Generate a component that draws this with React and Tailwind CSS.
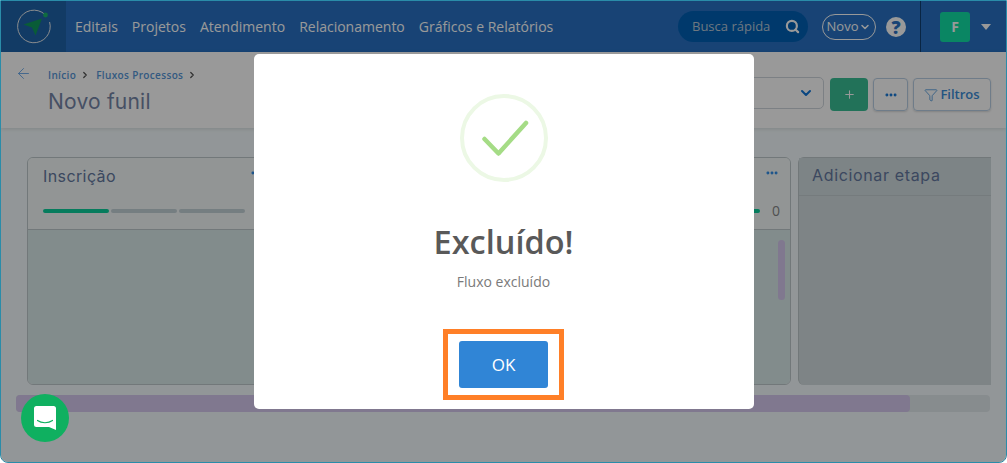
import { Search, ChevronDown, Ellipsis, Plus, Funnel, ArrowLeft, ChevronRight } from 'lucide-react';

const navItems = ['Editais', 'Projetos', 'Atendimento', 'Relacionamento', 'Gráficos e Relatórios'];

function Logo() {
  return (
    <svg width="36" height="36" viewBox="0 0 36 36" fill="none">
      <path d="M29 5.5A16.3 16.3 0 1 0 33.6 13" stroke="#e8eaed" strokeWidth="1" />
      <circle cx="29.5" cy="6" r="2.4" fill="#19b36b" />
      <path d="M7.5 15.5 26 9.5 19.5 26.5 16 18.5z" fill="#0f9a5c" />
    </svg>
  );
}

function Progress({ done }) {
  return (
    <div className="flex gap-[2px] w-[202px]">
      <div className="h-1 flex-1 rounded-full bg-[#0bcf9c]" />
      <div className={done ? 'h-1 flex-1 rounded-full bg-[#0bcf9c]' : 'h-1 flex-1 rounded-full bg-[#c4d3d8]'} />
      <div className={done ? 'h-1 flex-1 rounded-full bg-[#0bcf9c]' : 'h-1 flex-1 rounded-full bg-[#c4d3d8]'} />
    </div>
  );
}

function StageCard({ title, count, done }) {
  return (
    <div className="flex-1 h-[228px] rounded-md border border-[#bec8cb] flex flex-col overflow-hidden">
      <div className="h-[72px] bg-[#f3f9f9] border-b border-[#bec8cb] pl-[15px] pr-[11px] shrink-0">
        <div className="flex justify-between items-start pt-[6px]">
          <span className="text-[16px] tracking-[0.4px] text-[#64789f] font-['Inter',sans-serif]">{title}</span>
          <Ellipsis className="w-[14px] h-[14px] mt-[2px] text-[#2a8ae8]" strokeWidth={3} />
        </div>
        <div className="flex items-center justify-between h-1 mt-[21px] -mr-[1px]">
          <Progress done={done} />
          <span className="text-[14px] leading-none text-[#858585] font-['Open_Sans',sans-serif]">{count}</span>
        </div>
      </div>
      <div className="flex-1 bg-[#d9e9e9] flex justify-end pt-[10px] pr-[5px]">
        <div className="w-[7px] h-[60px] rounded-full bg-[#d5c8ee]" />
      </div>
    </div>
  );
}

export default function App() {
  return (
    <div className="relative w-[1007px] h-[463px] overflow-hidden border border-[#2a8ca9] rounded-b-lg bg-[#f4fbfd] font-['Open_Sans',sans-serif]">
      {/* page under the overlay */}
      <header className="flex items-center h-[51px] bg-[#2871c3] text-white">
        <div className="w-[65px] h-full flex items-center justify-center bg-[#1e63a8]">
          <Logo />
        </div>
        <nav className="flex gap-[14px] ml-[9px] text-[14px]">
          {navItems.map((item) => (
            <span key={item}>{item}</span>
          ))}
        </nav>
        <div className="ml-auto flex items-center h-full">
          <div className="w-[130px] h-[31px] rounded-full bg-[#0060b5] flex items-center justify-between pl-[14px] pr-[8px] text-[13px] text-[#b9c7d6]">
            <span>Busca rápida</span>
            <Search className="w-[15px] h-[15px] text-white" strokeWidth={3.5} />
          </div>
          <div className="ml-[14px] w-[54px] h-[26px] rounded-full border border-white flex items-center justify-center gap-[1px] text-[13px]">
            Novo
            <ChevronDown className="w-3 h-3" strokeWidth={3} />
          </div>
          <div className="ml-[10px] w-[20px] h-[20px] rounded-full bg-white flex items-center justify-center text-[#2871c3] text-[18px] font-extrabold leading-none">
            ?
          </div>
          <div className="ml-[14px] h-full border-l border-[#0f3f70] pl-[19px] pr-[15px] flex items-center gap-[11px]">
            <div className="w-[30px] h-[30px] rounded-[3px] bg-[#12dfa6] flex items-center justify-center text-[14px] font-bold">
              F
            </div>
            <div className="w-0 h-0 border-x-[5px] border-x-transparent border-t-[6px] border-t-white" />
          </div>
        </div>
      </header>

      <div className="h-[76px] bg-white shadow-[0_1px_4px_rgba(0,0,0,0.12)] flex justify-between pl-[14px] pr-[15px]">
        <div className="flex">
          <ArrowLeft className="w-[17px] h-[17px] mt-[13px] text-[#5a9fe8]" strokeWidth={1.2} />
          <div className="ml-[16px] pt-[16px]">
            <div className="flex items-center gap-[4px] text-[10px] font-semibold text-[#5596d8] leading-[14px] tracking-[0.35px]">
              <span>Início</span>
              <ChevronRight className="w-[10px] h-[10px] text-[#555]" strokeWidth={3} />
              <span className="ml-[2px]">Fluxos Processos</span>
              <ChevronRight className="w-[10px] h-[10px] text-[#555]" strokeWidth={3} />
            </div>
            <div className="mt-[6px] text-[21px] leading-[28px] text-[#7585a7] tracking-[0.2px] font-['Inter',sans-serif]">
              Novo funil
            </div>
          </div>
        </div>
        <div className="flex items-start gap-[5px] pt-[26px]">
          <div className="w-[240px] h-[32px] -mt-[1px] mr-[1px] rounded-[5px] border border-[#cfd6dc] flex items-center justify-end pr-[9px]">
            <ChevronDown className="w-[16px] h-[16px] text-[#1075d8]" strokeWidth={3} />
          </div>
          <button className="w-[38px] h-[33px] rounded-[4px] bg-[#3abf95] text-white flex items-center justify-center">
            <Plus className="w-[13px] h-[13px]" strokeWidth={2} />
          </button>
          <button className="w-[35px] h-[33px] rounded-[4px] border border-[#b9cfe4] flex items-center justify-center shadow-[0_1px_2px_rgba(0,0,0,0.15)]">
            <Ellipsis className="w-[14px] h-[14px] text-[#1075d8]" strokeWidth={3} />
          </button>
          <button className="w-[78px] h-[33px] rounded-[4px] border border-[#b9cfe4] flex items-center justify-center gap-[2px] text-[13px] font-semibold text-[#3a8dd8] shadow-[0_1px_2px_rgba(0,0,0,0.15)]">
            <Funnel className="w-[14px] h-[14px]" strokeWidth={1.3} />
            Filtros
          </button>
        </div>
      </div>

      <div className="flex gap-[7px] pl-[26px] pr-[15px] pt-[29px]">
        <div className="flex gap-[8px] w-[764px] shrink-0">
          <StageCard title="Inscrição" />
          <StageCard title="Análise" />
          <StageCard title="Resultado" count="0" done />
        </div>
        <div className="flex-1 h-[228px] rounded-l-md border-l border-t border-[#bec8cb] bg-[#d3dcdf]">
          <div className="h-[38px] bg-[#d0dcdf] border-b border-[#c3ced1] pl-[13px] pt-[5px] text-[16px] tracking-[0.65px] text-[#64789f] font-['Inter',sans-serif]">
            Adicionar etapa
          </div>
        </div>
      </div>

      <div className="mt-[10px] mx-[15px] w-[974px] h-[17px] rounded-[4px] bg-[#e1e9ed]">
        <div className="w-[894px] h-full rounded-[4px] bg-[#d5c8ee]" />
      </div>

      {/* overlay with the dialog */}
      <div className="absolute inset-0 bg-black/40 flex justify-center pt-[53px]">
        <div className="w-[500px] h-[355px] bg-white rounded-[5px] flex flex-col items-center pt-[40px]">
          <div className="w-[88px] h-[88px] rounded-full border-[4px] border-[#ecf8e5] flex items-center justify-center">
            <svg width="52" height="40" viewBox="0 0 52 40" fill="none">
              <path d="M6.5 21 20.5 35.500 48 5" stroke="#a5dc86" strokeWidth="4.5" strokeLinecap="round" strokeLinejoin="round" />
            </svg>
          </div>
          <h2 className="mt-[37px] text-[32.5px] leading-[45px] font-semibold text-[#595959]">Excluído!</h2>
          <p className="mt-[9px] text-[14px] leading-[18px] text-[#7a7a7a]">Fluxo excluído</p>
          <div className="mt-[38px] w-[121px] h-[71px] border-[5px] border-[#ff7f27] flex items-center justify-center">
            <button className="w-[89px] h-[47px] rounded-[3px] bg-[#3085d6] text-white text-[17px]">OK</button>
          </div>
        </div>
      </div>

      {/* chat launcher */}
      <div className="absolute left-[20px] top-[393px] w-12 h-12 rounded-full bg-[#0fb060] flex items-center justify-center">
        <svg width="22" height="24" viewBox="0 0 22 24" fill="none">
          <path d="M2.5 0h17A2.5 2.5 0 0 1 22 2.5V24l-7-3H2.500A2.500 2.500 0 0 1 0 18.500V2.500A2.500 2.500 0 0 1 2.500 0z" fill="#fff" />
          <path d="M3.500 14.500c4 3 11 3 15 0" stroke="#0fb060" strokeWidth="1.200" strokeLinecap="round" />
        </svg>
      </div>
    </div>
  );
}
